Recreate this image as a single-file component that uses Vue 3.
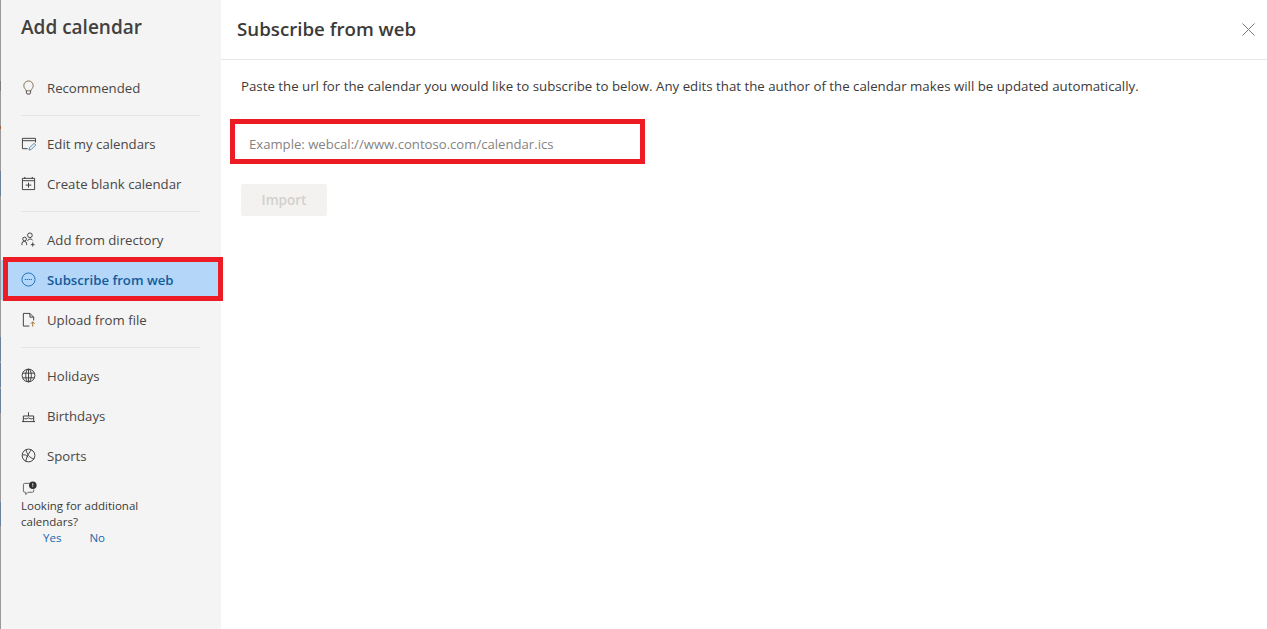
<template>
  <div class="page">
    <div class="strip"></div>
    <aside class="side">
      <h2 class="side-title">Add calendar</h2>
      <nav class="nav">
        <template v-for="(group, g) in groups" :key="g">
          <hr v-if="g > 0" class="sep" />
          <div
            v-for="item in group"
            :key="item.label"
            class="nav-item"
            :class="{ active: item.label === selected }"
          >
            <svg class="ico" viewBox="0 0 16 16" v-html="item.icon"></svg>
            <span>{{ item.label }}</span>
            <span v-if="item.label === selected" class="mark mark-nav"></span>
          </div>
        </template>
      </nav>
      <div class="feedback">
        <svg class="ico fb-ico" viewBox="0 0 16 16">
          <path d="M8 2.500H3A1.500 1.500 0 0 0 1.500 4v6.500A1.500 1.500 0 0 0 3 12h1v2.500L6.500 12H11a1.500 1.500 0 0 0 1.500-1.500V9" />
          <circle class="solid" cx="11.500" cy="4.500" r="4" />
          <path class="cut" d="M11.500 2.500v2.400M11.500 5.700v.8" />
        </svg>
        <p>Looking for additional calendars?</p>
        <div class="yes-no">
          <a>Yes</a>
          <a>No</a>
        </div>
      </div>
    </aside>
    <main class="main">
      <header class="head">
        <h1>Subscribe from web</h1>
        <svg class="close" viewBox="0 0 13 13">
          <path d="M.5.5l12 12M12.500.5l-12 12" />
        </svg>
      </header>
      <section class="body">
        <p class="lead">
          Paste the url for the calendar you would like to subscribe to below. Any edits that the
          author of the calendar makes will be updated automatically.
        </p>
        <div class="url-row">
          <input class="url" type="text" placeholder="Example: webcal://www.contoso.com/calendar.ics" />
          <span class="mark mark-url"></span>
        </div>
        <button class="import" disabled>Import</button>
      </section>
    </main>
  </div>
</template>

<script setup>
const selected = "Subscribe from web";

const groups = [
  [
    {
      label: "Recommended",
      icon: '<path d="M5.500 11.500C5.200 9.800 3 8.900 3 6a5 5 0 0 1 10 0c0 2.900-2.200 3.800-2.500 5.500z" stroke="#7d6a4c"/><path d="M5.800 11.500v2a1.500 1.500 0 0 0 1.500 1.500h1.400a1.500 1.500 0 0 0 1.500-1.500v-2"/>',
    },
  ],
  [
    {
      label: "Edit my calendars",
      icon: '<path d="M7 13.500H1.500v-11h14V7"/><path d="M1.500 5h14"/><path d="M8.500 15l.6-2.400 4.800-4.800 1.800 1.800-4.800 4.800z" stroke="#4a7fb0"/>',
    },
    {
      label: "Create blank calendar",
      icon: '<path d="M1.500 2.500h13v12h-13zM1.500 5h13M4 1v2M12 1v2M8 7v5.500M5 9.700h6"/>',
    },
  ],
  [
    {
      label: "Add from directory",
      icon: '<circle cx="9.500" cy="3.500" r="2.500"/><circle cx="3.800" cy="7.500" r="2"/><path d="M1 14v-1.500a2.500 2.500 0 0 1 5 0V14M7 9.500a3 3 0 0 1 5.500-.5M12.500 11v4.500M10.500 13.500h4"/>',
    },
    {
      label: "Subscribe from web",
      icon: '<circle cx="8" cy="8" r="7"/><path d="M4 8h8" stroke-dasharray="1.400 .7"/>',
    },
    {
      label: "Upload from file",
      icon: '<path d="M9 15H2.500V1.500h7l4 4V9M9.500 1.500v4h4"/><path d="M12.500 15.500V10.500M10.500 12.500l2-2 2 2" stroke="#9a6a2e"/>',
    },
  ],
  [
    {
      label: "Holidays",
      icon: '<circle cx="8" cy="8" r="6.800"/><ellipse cx="8" cy="8" rx="3" ry="6.800"/><path d="M1.800 5.500h12.400M1.800 10.500h12.400M8 1.200v13.600"/>',
    },
    {
      label: "Birthdays",
      icon: '<path d="M1 14.500h14M2.500 14.500v-6h11v6M2.500 10.500c1.800 1.500 3.500 1.500 5.500 0 2 1.500 3.700 1.500 5.500 0M8 8.500v-4"/>',
    },
    {
      label: "Sports",
      icon: '<circle cx="8" cy="8" r="6.800"/><path d="M5.500 1.800C6 6 9 11 14 11.500M11 1.900C9 4.500 6 9 5 14.300M1.500 7.500C4 6.800 6 7.500 7.500 10"/>',
    },
  ],
];
</script>

<style scoped>
.page {
  display: flex;
  height: 629px;
  font-family: "Open Sans", "Liberation Sans", sans-serif;
  color: #323130;
  background: #fff;
}
.strip {
  width: 1px;
  flex: none;
  background:
    linear-gradient(#6b8199, #6b8199) 0 171px / 1px 25px no-repeat,
    linear-gradient(#6b8199, #6b8199) 0 337px / 1px 24px no-repeat,
    linear-gradient(#6b8199, #6b8199) 0 363px / 1px 24px no-repeat,
    linear-gradient(#6b8199, #6b8199) 0 389px / 1px 24px no-repeat,
    linear-gradient(#6b8199, #6b8199) 0 502px / 1px 24px no-repeat,
    linear-gradient(#a0623a, #a0623a) 0 126px / 1px 3px no-repeat,
    linear-gradient(#7c7c7c, #7c7c7c) 0 81px / 1px 10px no-repeat,
    #999;
}
.side {
  width: 220px;
  flex: none;
  background: #f4f4f4;
  position: relative;
}
.side-title {
  margin: 0;
  padding-left: 20px;
  height: 68px;
  font-size: 19px;
  font-weight: 600;
  line-height: 54px;
  color: #424140;
}
.sep {
  margin: 7px 21px 8px 20px;
  border: none;
  border-top: 1px solid #e6e5e4;
}
.nav-item {
  position: relative;
  display: flex;
  align-items: center;
  height: 40px;
  padding-left: 20px;
  font-size: 13.200px;
  color: #484644;
}
.nav-item.active {
  background: #b3d6f9;
  color: #135c9a;
  font-weight: 600;
}
.ico {
  width: 15px;
  height: 15px;
  margin-right: 11px;
  margin-bottom: 2px;
  fill: none;
  stroke: #3b3a39;
  stroke-width: 1;
  flex: none;
}
.active .ico {
  stroke: #1d6fb5;
}
.mark {
  position: absolute;
  border: 5px solid #ed1c24;
  box-sizing: border-box;
  pointer-events: none;
}
.mark-nav {
  left: 2px;
  right: -2px;
  top: -3px;
  bottom: -1px;
}
.feedback {
  padding: 5px 0 0 20px;
  font-size: 11.500px;
  line-height: 16px;
  color: #3b3a39;
}
.fb-ico {
  display: block;
  margin: 0 0 0 1px;
  stroke: #605e5c;
}
.fb-ico .solid {
  fill: #323130;
  stroke: none;
}
.fb-ico .cut {
  stroke: #fff;
}
.feedback p {
  margin: 2px 0 0;
  width: 140px;
}
.yes-no {
  display: flex;
  gap: 28px;
  padding-left: 22px;
  color: #1768ad;
}
.main {
  flex: 1;
  min-width: 0;
}
.head {
  height: 57px;
  padding: 0 12px 2px 16px;
  border-bottom: 1px solid #e9e8e7;
  display: flex;
  align-items: center;
  justify-content: space-between;
}
.head h1 {
  margin: 0;
  font-size: 18.700px;
  font-weight: 600;
  color: #3b3a39;
}
.close {
  width: 13px;
  height: 13px;
  margin-top: 2px;
  fill: none;
  stroke: #7a7977;
  stroke-width: 1;
}
.body {
  padding: 16px 0 0 20px;
}
.lead {
  margin: 0;
  font-size: 13.270px;
  line-height: 20px;
  color: #3b3a39;
  white-space: nowrap;
}
.url-row {
  position: relative;
  width: 393px;
  margin-top: 32px;
}
.url {
  display: block;
  width: 100%;
  height: 32px;
  box-sizing: border-box;
  border: none;
  outline: none;
  padding: 0 8px;
  font: 13.130px "Open Sans", "Liberation Sans", sans-serif;
  background: #fff;
}
.url::placeholder {
  color: #858382;
  opacity: 1;
}
.mark-url {
  left: -11px;
  right: -11px;
  top: -9px;
  bottom: -4px;
}
.import {
  display: block;
  width: 86px;
  height: 32px;
  margin-top: 24px;
  border: none;
  border-radius: 2px;
  background: #f3f2f1;
  color: #d2d0ce;
  font: 600 13.500px "Open Sans", "Liberation Sans", sans-serif;
}
</style>
